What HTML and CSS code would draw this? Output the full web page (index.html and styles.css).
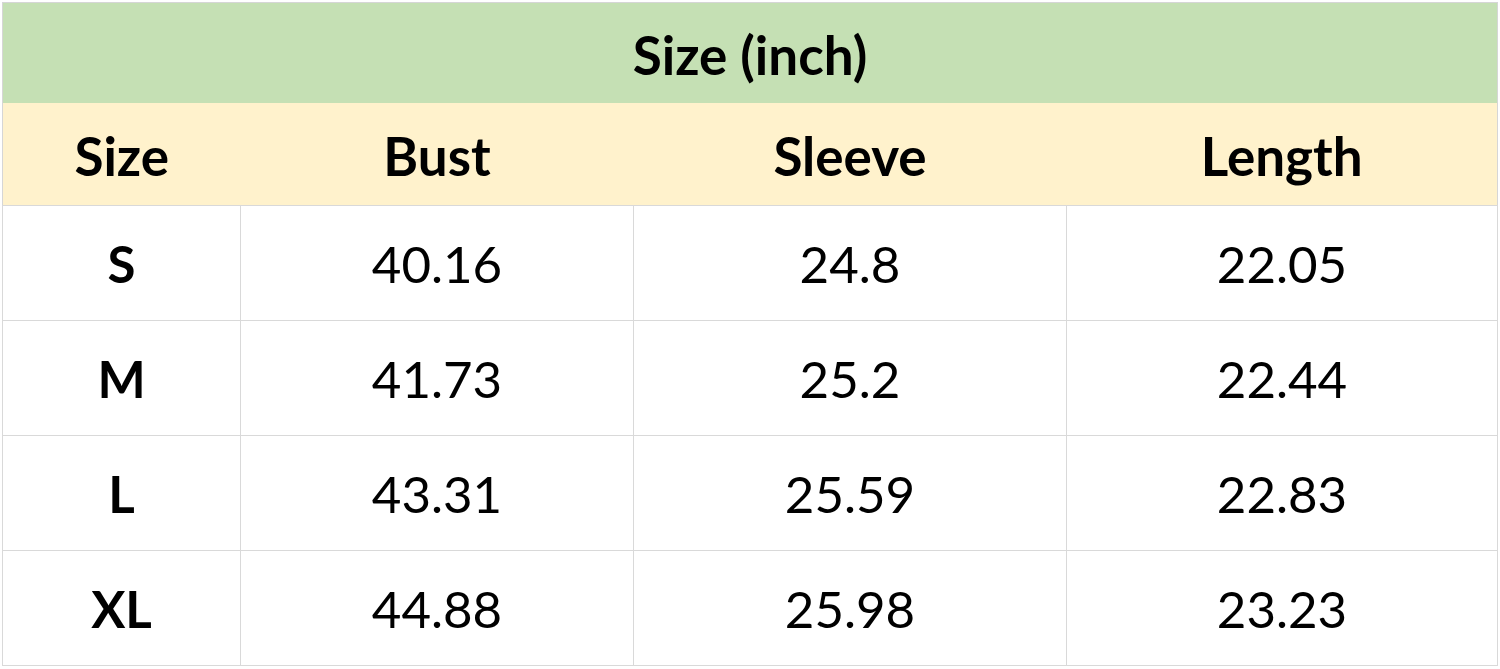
FILE: index.html
```html
<!DOCTYPE html>
<html>
<head>
<meta charset="utf-8">
<link rel="stylesheet" href="styles.css">
</head>
<body>
<table class="sheet">
  <colgroup>
    <col class="c1"><col class="c2"><col class="c3"><col class="c4">
  </colgroup>
  <thead>
    <tr class="title"><th colspan="4">Size (inch)</th></tr>
    <tr class="head"><th>Size</th><th>Bust</th><th>Sleeve</th><th>Length</th></tr>
  </thead>
  <tbody>
    <tr><th>S</th><td>40.16</td><td>24.8</td><td>22.05</td></tr>
    <tr><th>M</th><td>41.73</td><td>25.2</td><td>22.44</td></tr>
    <tr><th>L</th><td>43.31</td><td>25.59</td><td>22.83</td></tr>
    <tr><th>XL</th><td>44.88</td><td>25.98</td><td>23.23</td></tr>
  </tbody>
</table>
</body>
</html>
```

FILE: styles.css
```css
html, body {
  margin: 0;
  padding: 0;
  background: #ffffff;
}
.sheet {
  margin: 2px 0 0 2px;
  width: 1496px;
  border-collapse: collapse;
  table-layout: fixed;
  border: 1px solid #d6d6d6;
  font-family: Lato, "Open Sans", sans-serif;
  color: #000;
}
.c1 { width: 238px; }
.c2 { width: 393px; }
.c3 { width: 433px; }
.c4 { width: auto; }
.sheet th, .sheet td {
  padding: 0;
  text-align: center;
  vertical-align: middle;
}
.title th {
  height: 97px;
  background: #c5e0b4;
  font-size: 53px;
  font-weight: 700;
  padding-top: 3px;
}
.head th {
  height: 99px;
  background: #fff2cc;
  font-size: 53px;
  font-weight: 700;
  padding-top: 3px;
}
tbody tr {
  height: 115px;
}
tbody th, tbody td {
  border: 1px solid #d9d9d9;
  font-size: 51px;
}
tbody th {
  font-weight: 700;
}
tbody td {
  font-weight: 400;
}
```
